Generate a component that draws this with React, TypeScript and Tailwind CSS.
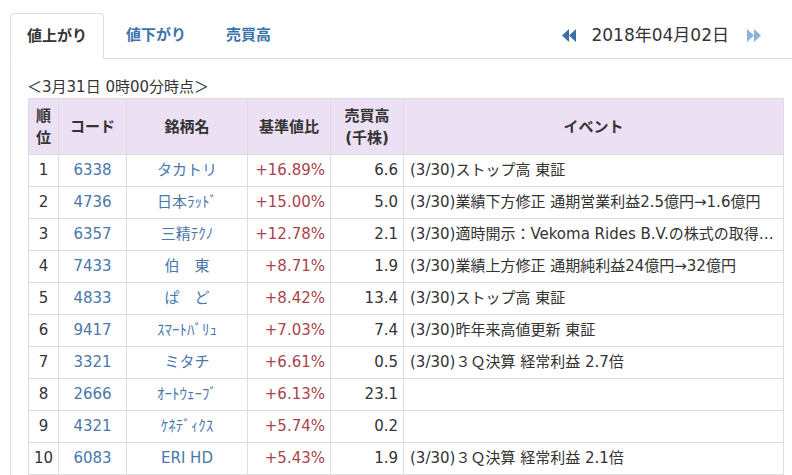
import { useState } from "react";

interface Row {
  rank: number;
  code: string;
  name: string;
  change: string;
  volume: string;
  event: string;
}

const rows: Row[] = [
  { rank: 1, code: "6338", name: "タカトリ", change: "+16.89%", volume: "6.6", event: "(3/30)ストップ高 東証" },
  { rank: 2, code: "4736", name: "日本ﾗｯﾄﾞ", change: "+15.00%", volume: "5.0", event: "(3/30)業績下方修正 通期営業利益2.5億円→1.6億円" },
  { rank: 3, code: "6357", name: "三精ﾃｸﾉ", change: "+12.78%", volume: "2.1", event: "(3/30)適時開示：Vekoma Rides B.V.の株式の取得に関するお知らせ" },
  { rank: 4, code: "7433", name: "伯　東", change: "+8.71%", volume: "1.9", event: "(3/30)業績上方修正 通期純利益24億円→32億円" },
  { rank: 5, code: "4833", name: "ぱ　ど", change: "+8.42%", volume: "13.4", event: "(3/30)ストップ高 東証" },
  { rank: 6, code: "9417", name: "ｽﾏｰﾄﾊﾞﾘｭ", change: "+7.03%", volume: "7.4", event: "(3/30)昨年来高値更新 東証" },
  { rank: 7, code: "3321", name: "ミタチ", change: "+6.61%", volume: "0.5", event: "(3/30)３Ｑ決算 経常利益 2.7倍" },
  { rank: 8, code: "2666", name: "ｵｰﾄｳｪｰﾌﾞ", change: "+6.13%", volume: "23.1", event: "" },
  { rank: 9, code: "4321", name: "ｹﾈﾃﾞｨｸｽ", change: "+5.74%", volume: "0.2", event: "" },
  { rank: 10, code: "6083", name: "ERI HD", change: "+5.43%", volume: "1.9", event: "(3/30)３Ｑ決算 経常利益 2.1倍" },
];

const tabs = ["値上がり", "値下がり", "売買高"];

function DoubleArrow({ dir, color }: { dir: "left" | "right"; color: string }) {
  // two solid triangles, like a rewind / fast-forward glyph
  const pts =
    dir === "left"
      ? ["8,1 8,14 1,7.5", "15,1 15,14 8,7.5"]
      : ["1,1 1,14 8,7.5", "8,1 8,14 15,7.5"];
  return (
    <svg width="16" height="15" viewBox="0 0 16 15">
      {pts.map((p) => (
        <polygon key={p} points={p} fill={color} />
      ))}
    </svg>
  );
}

export default function App() {
  const [active, setActive] = useState(0);

  return (
    <div
      className="w-[792px] h-[475px] overflow-hidden bg-white pl-[10px] pt-[13px] text-[#333]"
      style={{ fontFamily: '"DejaVu Sans", "Noto Sans CJK JP", sans-serif' }}
    >
      {/* Tabs + date nav */}
      <div className="flex items-end border-b border-[#dddddd] h-[46px]">
        {tabs.map((t, i) => (
          <button
            key={t}
            onClick={() => setActive(i)}
            className={
              i === active
                ? "h-[46px] -mb-px px-[16px] w-[94px] text-left rounded-t-[4px] border border-[#dddddd] border-b-white bg-white text-[15px] font-bold text-[#333]"
                : "h-[46px] px-[16px] text-left text-[15px] font-bold text-[#3a72ad]"
            }
          >
            <span className={i === 1 ? "pl-[6px]" : i === 2 ? "pl-[8px]" : ""}>{t}</span>
          </button>
        ))}
        <div className="ml-auto flex items-center h-[46px] pr-[30px]">
          <DoubleArrow dir="left" color="#3d6fa3" />
          <span className="text-[17px] text-[#333] leading-none ml-[14px] mr-[17px]">2018年04月02日</span>
          <DoubleArrow dir="right" color="#8db2d8" />
        </div>
      </div>

      {/* Panel */}
      <div className="border-l border-[#dddddd] pl-[17px] pt-[17px] h-[420px]">
        <div className="text-[15px] leading-[22px] h-[22px] -ml-[1px]">＜3月31日 0時00分時点＞</div>
        <table className="w-[756px] border-collapse table-fixed text-[15px]">
          <colgroup>
            <col className="w-[30px]" />
            <col className="w-[68px]" />
            <col className="w-[121px]" />
            <col className="w-[83px]" />
            <col className="w-[73px]" />
            <col />
          </colgroup>
          <thead>
            <tr className="bg-[#ebe0f4] h-[56px] font-bold text-[15px] leading-[22px]">
              <th className="border border-[#dddddd] font-bold">順<br />位</th>
              <th className="border border-[#dddddd] font-bold">コード</th>
              <th className="border border-[#dddddd] font-bold">銘柄名</th>
              <th className="border border-[#dddddd] font-bold">基準値比</th>
              <th className="border border-[#dddddd] font-bold">売買高<br />(千株)</th>
              <th className="border border-[#dddddd] font-bold">イベント</th>
            </tr>
          </thead>
          <tbody>
            {rows.map((r) => (
              <tr key={r.rank} className="h-[32px]">
                <td className="border border-[#dddddd] text-center">{r.rank}</td>
                <td className="border border-[#dddddd] text-center text-[#4a78ab]">{r.code}</td>
                <td className="border border-[#dddddd] text-center text-[#4a78ab] whitespace-nowrap">{r.name}</td>
                <td className="border border-[#dddddd] text-right pr-[5px] text-[#a8454c]">{r.change}</td>
                <td className="border border-[#dddddd] text-right pr-[5px]">{r.volume}</td>
                <td className="border border-[#dddddd] pl-[6px] pr-[4px] truncate">{r.event}</td>
              </tr>
            ))}
          </tbody>
        </table>
      </div>
    </div>
  );
}
